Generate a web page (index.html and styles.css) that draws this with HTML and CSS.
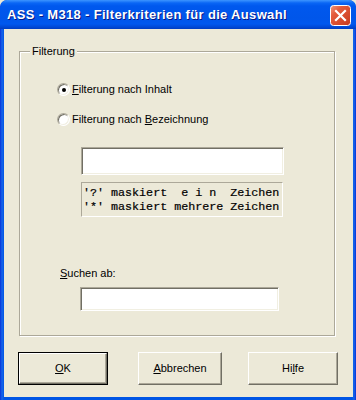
FILE: index.html
```html
<!DOCTYPE html>
<html>
<head>
<meta charset="utf-8">
<link rel="stylesheet" href="styles.css">
</head>
<body>
<div class="window">
  <div class="titlebar">
    <span class="title">ASS - M318 - Filterkriterien für die Auswahl</span>
    <span class="close">
      <svg width="21" height="21" viewBox="0 0 21 21">
        <defs>
          <linearGradient id="cg" x1="0" y1="0" x2="1" y2="1">
            <stop offset="0" stop-color="#f19a80"/>
            <stop offset="0.3" stop-color="#e45c3d"/>
            <stop offset="1" stop-color="#c7391c"/>
          </linearGradient>
        </defs>
        <rect x="0.5" y="0.5" width="20" height="20" rx="3" fill="url(#cg)" stroke="#fff"/>
        <path d="M6 6 L15 15 M15 6 L6 15" stroke="#fff" stroke-width="2.2" stroke-linecap="square"/>
      </svg>
    </span>
  </div>
  <div class="client">
    <div class="group">
      <span class="legend">Filterung</span>
      <label class="radio first"><span class="circle checked"></span><span class="rlabel"><u>F</u>ilterung nach Inhalt</span></label>
      <label class="radio second"><span class="circle"></span><span class="rlabel">Filterung nach <u>B</u>ezeichnung</span></label>
      <div class="field field1"></div>
      <div class="hint">'?' maskiert  e i n  Zeichen<br>'*' maskiert mehrere Zeichen</div>
      <div class="search-label"><u>S</u>uchen ab:</div>
      <div class="field field2"></div>
    </div>
    <div class="buttons">
      <div class="btn default ok"><span class="face"><u>O</u>K</span></div>
      <div class="btn cancel"><span class="face"><u>A</u>bbrechen</span></div>
      <div class="btn help"><span class="face">Hi<u>l</u>fe</span></div>
    </div>
  </div>
</div>
</body>
</html>
```

FILE: styles.css
```css
html, body {
  margin: 0;
  padding: 0;
  background: #ece9d8;
}
.window {
  width: 356px;
  height: 400px;
  display: flex;
  flex-direction: column;
  background: linear-gradient(to right, #0831d9 0, #1665ea 2px, #0055e5 4px, #0055e5 352px, #1665ea 354px, #0831d9 356px);
  border-radius: 7px 7px 0 0;
  overflow: hidden;
  font-family: "Liberation Sans", Arial, sans-serif;
  font-size: 11px;
  color: #000;
}
.titlebar {
  height: 29px;
  flex: none;
  display: flex;
  align-items: center;
  justify-content: space-between;
  padding: 0 5px 0 7px;
  background: linear-gradient(to bottom, #3d95ff 0, #0a66f5 3px, #0058ee 6px, #0056ea 18px, #0058ee 24px, #0049d6 27px, #003dc0 29px);
  border-radius: 7px 7px 0 0;
}
.title {
  color: #fff;
  font-weight: bold;
  font-size: 13px;
  text-shadow: 1px 1px 0 #0a1883;
  letter-spacing: 0.33px;
  white-space: pre;
}
.close {
  display: block;
  width: 21px;
  height: 21px;
  margin-top: 1px;
}
.close svg {
  display: block;
}
.client {
  flex: 1;
  margin: 0 3px 3px 4px;
  background: #ece9d8;
  display: flex;
  flex-direction: column;
}
.group {
  position: relative;
  margin: 22px 0 0 15px;
  width: 316px;
  height: 285px;
  border: 1px solid #aca899;
  box-sizing: border-box;
  box-shadow: inset 1px 1px 0 #fff, 1px 1px 0 #fff;
  display: flex;
  flex-direction: column;
  align-items: flex-start;
}
.legend {
  position: absolute;
  top: -7px;
  left: 10px;
  padding: 0 2px;
  line-height: 13px;
  background: #ece9d8;
}
.radio {
  display: flex;
  align-items: center;
  height: 13px;
  line-height: 13px;
  margin-left: 37px;
}
.radio.first {
  margin-top: 31px;
}
.radio.second {
  margin-top: 17px;
}
.circle {
  width: 13px;
  height: 13px;
  box-sizing: border-box;
  border-radius: 50%;
  border: 1px solid;
  border-color: #aca899 #fff #fff #aca899;
  box-shadow: inset 1px 1px 0 #716f64, inset -1px -1px 0 #f1efe2;
  background: #fff;
  position: relative;
  margin-right: 2px;
}
.circle.checked::after {
  content: "";
  position: absolute;
  left: 3.5px;
  top: 3.5px;
  width: 4px;
  height: 4px;
  border-radius: 50%;
  background: #000;
}
.field {
  box-sizing: border-box;
  background: #fff;
  border: 1px solid;
  border-color: #aca899 #fff #fff #aca899;
  box-shadow: inset 1px 1px 0 #716f64, inset -1px -1px 0 #f1efe2;
}
.field1 {
  margin: 21px 0 0 61px;
  width: 203px;
  height: 28px;
}
.hint {
  margin: 7px 0 0 61px;
  width: 202px;
  height: 35px;
  box-sizing: border-box;
  border: 1px solid;
  border-color: #aca899 #fff #fff #aca899;
  padding: 3px 0 0 1px;
  font-family: "Liberation Mono", "Courier New", monospace;
  font-size: 11.7px;
  line-height: 14px;
  white-space: pre;
  -webkit-text-stroke: 0.2px #000;
}
.search-label {
  margin: 50px 0 0 40px;
  line-height: 13px;
}
.field2 {
  margin: 7px 0 0 60px;
  width: 199px;
  height: 24px;
}
.buttons {
  display: flex;
  align-items: flex-start;
  margin: 16px 0 0 14px;
}
.btn {
  box-sizing: border-box;
  height: 33px;
  display: flex;
  background: #ece9d8;
}
.btn .face {
  flex: 1;
  display: flex;
  align-items: center;
  justify-content: center;
  border: 1px solid;
  border-color: #fff #716f64 #716f64 #fff;
  box-shadow: inset -1px -1px 0 #aca899;
  padding-bottom: 1px;
}
.btn.default {
  border: 1px solid #000;
}
.ok {
  width: 90px;
}
.cancel {
  width: 84px;
  margin-left: 30px;
}
.help {
  width: 90px;
  margin-left: 26px;
}
u {
  text-decoration: underline;
  text-underline-offset: 1px;
}
```
